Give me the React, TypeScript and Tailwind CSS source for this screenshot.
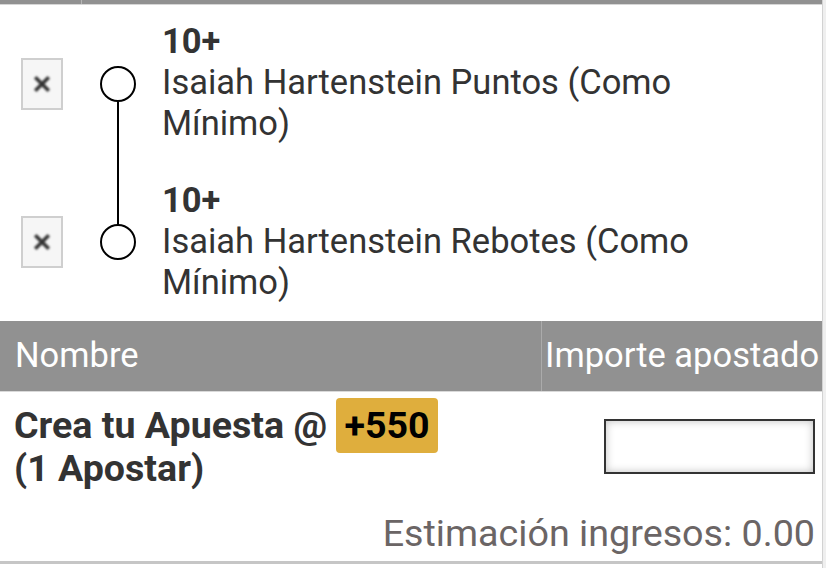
import React from 'react';

const legs = [
  { line: '10+', name: 'Isaiah Hartenstein Puntos (Como Mínimo)' },
  { line: '10+', name: 'Isaiah Hartenstein Rebotes (Como Mínimo)' },
];

const RemoveBox = () => (
  <div className="w-[42px] h-[52px] shrink-0 border-2 border-[#cfcfcf] bg-[#f6f6f6] flex items-center justify-center">
    <svg width="20" height="20" viewBox="0 0 20 20" className="blur-[0.8px]">
      <path d="M4.5 4.5 L15.5 15.5 M15.5 4.5 L4.5 15.5" stroke="#333" strokeWidth="3.6" strokeLinecap="square" />
    </svg>
  </div>
);

export default function App() {
  return (
    <div className="w-[826px] h-[568px] flex bg-white overflow-hidden font-['Roboto',sans-serif]">
      <div className="w-[822px] flex flex-col">
        {/* top strip */}
        <div className="h-[4px] bg-[#919191] flex">
          <div className="w-[82px] border-r border-[#b5b5b5]" />
        </div>
        <div className="h-px bg-[#d6d6d6]" />

        {/* legs */}
        <div className="flex flex-col">
          {legs.map((leg, i) => (
            <div key={i} className="flex items-center pl-[21px]">
              <RemoveBox />
              <div className="ml-[37px] w-[36px] self-stretch flex flex-col items-center shrink-0">
                <div className={`flex-1 w-[2px] ${i === 0 ? '' : 'bg-black'}`} />
                <div className="w-[36px] h-[36px] rounded-full border-2 border-black" />
                <div className={`flex-1 w-[2px] ${i === 0 ? 'bg-black' : ''}`} />
              </div>
              <div
                className={`ml-[26px] text-[34.5px] leading-[41px] text-[#333] ${
                  i === 0 ? 'pt-[16px] pb-[18px]' : 'pt-[18px] pb-[18px]'
                }`}
              >
                <div className="font-bold">{leg.line}</div>
                <div className="max-w-[640px]">{leg.name}</div>
              </div>
            </div>
          ))}
        </div>

        {/* table header */}
        <div className="h-[70px] bg-[#919191] flex text-white text-[34.5px]">
          <div className="w-[541px] flex items-center pl-[15px]">Nombre</div>
          <div className="flex-1 border-l border-[#ababab] flex items-center pl-[3px] whitespace-nowrap">
            Importe apostado
          </div>
        </div>
        <div className="h-px bg-[#d9d9d9]" />

        {/* bet row */}
        <div className="flex pt-[12px]">
          <div className="w-[541px] pl-[14px] text-[37.6px] leading-[42px] font-bold text-[#333]">
            Crea tu Apuesta @{' '}
            <span className="inline-block bg-[#dfae3d] text-black rounded-[4px] px-[8px] leading-[55px] -my-[6.5px]">
              +550
            </span>
            <br />
            (1 Apostar)
          </div>
          <div className="flex-1 flex justify-end items-start pt-[15px] pr-[7px]">
            <input
              className="w-[211px] h-[55px] border-2 border-[#333] bg-white shadow-[inset_0_0_9px_rgba(0,0,0,0.25)] outline-none"
              aria-label="Importe apostado"
            />
          </div>
        </div>

        <div className="flex justify-end pr-[7px] pt-[22px] text-[37.7px] leading-[44px] text-[#6b6565] whitespace-nowrap">
          Estimación ingresos: 0.00
        </div>

        <div className="mt-auto mb-[4px] h-[3px] bg-[#c6c6c6]" />
      </div>
      <div className="w-px bg-[#d2d2d2]" />
      <div className="w-[3px] bg-[#efefef]" />
    </div>
  );
}
